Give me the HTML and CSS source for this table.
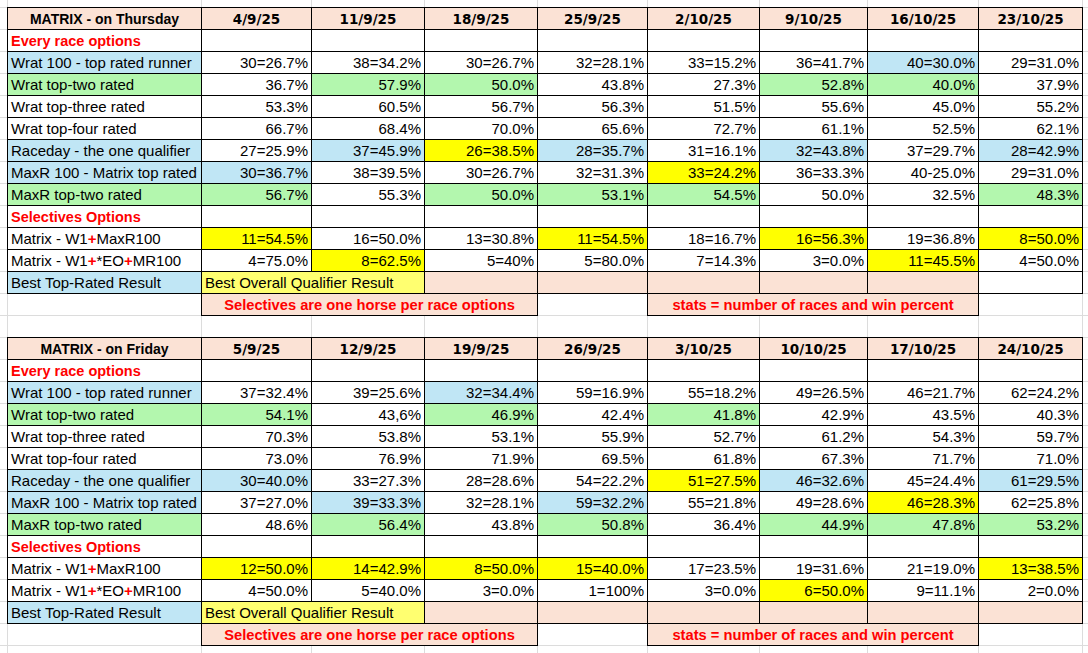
FILE: index.html
```html
<!DOCTYPE html>
<html>
<head>
<meta charset="utf-8">
<link rel="stylesheet" href="styles.css">
</head>
<body>
<div class="sheet">
  <div class="tbl">
    <div class="c hdr">MATRIX - on Thursday</div>
    <div class="c hdr date">4/9/25</div>
    <div class="c hdr date">11/9/25</div>
    <div class="c hdr date">18/9/25</div>
    <div class="c hdr date">25/9/25</div>
    <div class="c hdr date">2/10/25</div>
    <div class="c hdr date">9/10/25</div>
    <div class="c hdr date">16/10/25</div>
    <div class="c hdr date">23/10/25</div>

    <div class="c sec">Every race options</div>
    <div class="c"></div><div class="c"></div><div class="c"></div><div class="c"></div><div class="c"></div><div class="c"></div><div class="c"></div><div class="c"></div>

    <div class="c lbl blue">Wrat 100 - top rated runner</div>
    <div class="c num">30=26.7%</div>
    <div class="c num">38=34.2%</div>
    <div class="c num">30=26.7%</div>
    <div class="c num">32=28.1%</div>
    <div class="c num">33=15.2%</div>
    <div class="c num">36=41.7%</div>
    <div class="c num blue">40=30.0%</div>
    <div class="c num">29=31.0%</div>

    <div class="c lbl green">Wrat top-two rated</div>
    <div class="c num">36.7%</div>
    <div class="c num green">57.9%</div>
    <div class="c num green">50.0%</div>
    <div class="c num">43.8%</div>
    <div class="c num">27.3%</div>
    <div class="c num green">52.8%</div>
    <div class="c num green">40.0%</div>
    <div class="c num">37.9%</div>

    <div class="c lbl">Wrat top-three rated</div>
    <div class="c num">53.3%</div>
    <div class="c num">60.5%</div>
    <div class="c num">56.7%</div>
    <div class="c num">56.3%</div>
    <div class="c num">51.5%</div>
    <div class="c num">55.6%</div>
    <div class="c num">45.0%</div>
    <div class="c num">55.2%</div>

    <div class="c lbl">Wrat top-four rated</div>
    <div class="c num">66.7%</div>
    <div class="c num">68.4%</div>
    <div class="c num">70.0%</div>
    <div class="c num">65.6%</div>
    <div class="c num">72.7%</div>
    <div class="c num">61.1%</div>
    <div class="c num">52.5%</div>
    <div class="c num">62.1%</div>

    <div class="c lbl blue">Raceday - the one qualifier</div>
    <div class="c num">27=25.9%</div>
    <div class="c num blue">37=45.9%</div>
    <div class="c num yellow">26=38.5%</div>
    <div class="c num blue">28=35.7%</div>
    <div class="c num">31=16.1%</div>
    <div class="c num blue">32=43.8%</div>
    <div class="c num">37=29.7%</div>
    <div class="c num blue">28=42.9%</div>

    <div class="c lbl blue">MaxR 100 - Matrix top rated</div>
    <div class="c num blue">30=36.7%</div>
    <div class="c num">38=39.5%</div>
    <div class="c num">30=26.7%</div>
    <div class="c num">32=31.3%</div>
    <div class="c num yellow">33=24.2%</div>
    <div class="c num">36=33.3%</div>
    <div class="c num">40-25.0%</div>
    <div class="c num">29=31.0%</div>

    <div class="c lbl green">MaxR top-two rated</div>
    <div class="c num green">56.7%</div>
    <div class="c num">55.3%</div>
    <div class="c num green">50.0%</div>
    <div class="c num green">53.1%</div>
    <div class="c num green">54.5%</div>
    <div class="c num">50.0%</div>
    <div class="c num">32.5%</div>
    <div class="c num green">48.3%</div>

    <div class="c sec">Selectives Options</div>
    <div class="c"></div><div class="c"></div><div class="c"></div><div class="c"></div><div class="c"></div><div class="c"></div><div class="c"></div><div class="c"></div>

    <div class="c lbl">Matrix - W1<span class="plus">+</span>MaxR100</div>
    <div class="c num yellow">11=54.5%</div>
    <div class="c num">16=50.0%</div>
    <div class="c num">13=30.8%</div>
    <div class="c num yellow">11=54.5%</div>
    <div class="c num">18=16.7%</div>
    <div class="c num yellow">16=56.3%</div>
    <div class="c num">19=36.8%</div>
    <div class="c num yellow">8=50.0%</div>

    <div class="c lbl">Matrix - W1<span class="plus">+</span>*EO<span class="plus">+</span>MR100</div>
    <div class="c num">4=75.0%</div>
    <div class="c num yellow">8=62.5%</div>
    <div class="c num">5=40%</div>
    <div class="c num">5=80.0%</div>
    <div class="c num">7=14.3%</div>
    <div class="c num">3=0.0%</div>
    <div class="c num yellow">11=45.5%</div>
    <div class="c num">4=50.0%</div>

    <div class="c lbl blue">Best Top-Rated Result</div>
    <div class="c lbl best span2">Best Overall Qualifier Result</div>
    <div class="c salmon"></div>
    <div class="c salmon"></div>
    <div class="c salmon"></div>
    <div class="c salmon"></div>
    <div class="c salmon"></div>
    <div class="c"></div>
  </div>
  <div class="notes">
    <div class="blank"></div>
    <div class="note">Selectives are one horse per race options</div>
    <div class="blank"></div>
    <div class="note">stats = number of races and win percent</div>
    <div class="blank"></div>
  </div>

  <div class="tbl second">
    <div class="c hdr">MATRIX - on Friday</div>
    <div class="c hdr date">5/9/25</div>
    <div class="c hdr date">12/9/25</div>
    <div class="c hdr date">19/9/25</div>
    <div class="c hdr date">26/9/25</div>
    <div class="c hdr date">3/10/25</div>
    <div class="c hdr date">10/10/25</div>
    <div class="c hdr date">17/10/25</div>
    <div class="c hdr date">24/10/25</div>

    <div class="c sec">Every race options</div>
    <div class="c"></div><div class="c"></div><div class="c"></div><div class="c"></div><div class="c"></div><div class="c"></div><div class="c"></div><div class="c"></div>

    <div class="c lbl blue">Wrat 100 - top rated runner</div>
    <div class="c num">37=32.4%</div>
    <div class="c num">39=25.6%</div>
    <div class="c num blue">32=34.4%</div>
    <div class="c num">59=16.9%</div>
    <div class="c num">55=18.2%</div>
    <div class="c num">49=26.5%</div>
    <div class="c num">46=21.7%</div>
    <div class="c num">62=24.2%</div>

    <div class="c lbl green">Wrat top-two rated</div>
    <div class="c num green">54.1%</div>
    <div class="c num">43,6%</div>
    <div class="c num green">46.9%</div>
    <div class="c num">42.4%</div>
    <div class="c num green">41.8%</div>
    <div class="c num">42.9%</div>
    <div class="c num">43.5%</div>
    <div class="c num">40.3%</div>

    <div class="c lbl">Wrat top-three rated</div>
    <div class="c num">70.3%</div>
    <div class="c num">53.8%</div>
    <div class="c num">53.1%</div>
    <div class="c num">55.9%</div>
    <div class="c num">52.7%</div>
    <div class="c num">61.2%</div>
    <div class="c num">54.3%</div>
    <div class="c num">59.7%</div>

    <div class="c lbl">Wrat top-four rated</div>
    <div class="c num">73.0%</div>
    <div class="c num">76.9%</div>
    <div class="c num">71.9%</div>
    <div class="c num">69.5%</div>
    <div class="c num">61.8%</div>
    <div class="c num">67.3%</div>
    <div class="c num">71.7%</div>
    <div class="c num">71.0%</div>

    <div class="c lbl blue">Raceday - the one qualifier</div>
    <div class="c num blue">30=40.0%</div>
    <div class="c num">33=27.3%</div>
    <div class="c num">28=28.6%</div>
    <div class="c num">54=22.2%</div>
    <div class="c num yellow">51=27.5%</div>
    <div class="c num blue">46=32.6%</div>
    <div class="c num">45=24.4%</div>
    <div class="c num blue">61=29.5%</div>

    <div class="c lbl blue">MaxR 100 - Matrix top rated</div>
    <div class="c num">37=27.0%</div>
    <div class="c num blue">39=33.3%</div>
    <div class="c num">32=28.1%</div>
    <div class="c num blue">59=32.2%</div>
    <div class="c num">55=21.8%</div>
    <div class="c num">49=28.6%</div>
    <div class="c num yellow">46=28.3%</div>
    <div class="c num">62=25.8%</div>

    <div class="c lbl green">MaxR top-two rated</div>
    <div class="c num">48.6%</div>
    <div class="c num green">56.4%</div>
    <div class="c num">43.8%</div>
    <div class="c num green">50.8%</div>
    <div class="c num">36.4%</div>
    <div class="c num green">44.9%</div>
    <div class="c num green">47.8%</div>
    <div class="c num green">53.2%</div>

    <div class="c sec">Selectives Options</div>
    <div class="c"></div><div class="c"></div><div class="c"></div><div class="c"></div><div class="c"></div><div class="c"></div><div class="c"></div><div class="c"></div>

    <div class="c lbl">Matrix - W1<span class="plus">+</span>MaxR100</div>
    <div class="c num yellow">12=50.0%</div>
    <div class="c num yellow">14=42.9%</div>
    <div class="c num yellow">8=50.0%</div>
    <div class="c num yellow">15=40.0%</div>
    <div class="c num">17=23.5%</div>
    <div class="c num">19=31.6%</div>
    <div class="c num">21=19.0%</div>
    <div class="c num yellow">13=38.5%</div>

    <div class="c lbl">Matrix - W1<span class="plus">+</span>*EO<span class="plus">+</span>MR100</div>
    <div class="c num">4=50.0%</div>
    <div class="c num">5=40.0%</div>
    <div class="c num">3=0.0%</div>
    <div class="c num">1=100%</div>
    <div class="c num">3=0.0%</div>
    <div class="c num yellow">6=50.0%</div>
    <div class="c num">9=11.1%</div>
    <div class="c num">2=0.0%</div>

    <div class="c lbl blue">Best Top-Rated Result</div>
    <div class="c lbl best span2">Best Overall Qualifier Result</div>
    <div class="c salmon"></div>
    <div class="c salmon"></div>
    <div class="c salmon"></div>
    <div class="c salmon"></div>
    <div class="c salmon"></div>
    <div class="c salmon"></div>
  </div>
  <div class="notes">
    <div class="blank"></div>
    <div class="note">Selectives are one horse per race options</div>
    <div class="blank"></div>
    <div class="note">stats = number of races and win percent</div>
    <div class="blank"></div>
  </div>
</div>
</body>
</html>
```
FILE: styles.css
```css
html, body {
  margin: 0;
  padding: 0;
}

body {
  width: 1088px;
  height: 653px;
  overflow: hidden;
  font-family: "Liberation Sans", Arial, sans-serif;
  color: #000;
  background-color: #fff;
  background-image:
    linear-gradient(to right,
      transparent 7px, #dcdcdc 7px 8px,
      transparent 8px 201px, #dcdcdc 201px 202px,
      transparent 202px 311px, #dcdcdc 311px 312px,
      transparent 312px 424px, #dcdcdc 424px 425px,
      transparent 425px 537px, #dcdcdc 537px 538px,
      transparent 538px 647px, #dcdcdc 647px 648px,
      transparent 648px 759px, #dcdcdc 759px 760px,
      transparent 760px 867px, #dcdcdc 867px 868px,
      transparent 868px 978px, #dcdcdc 978px 979px,
      transparent 979px 1082px, #dcdcdc 1082px 1083px,
      transparent 1083px),
    linear-gradient(to bottom, #dcdcdc 0 1px, transparent 1px);
  background-size: 100% 100%, 100% 22px;
  background-position: 0 0, 0 7px;
  background-repeat: no-repeat, repeat;
}

.sheet {
  display: flex;
  flex-direction: column;
  align-items: flex-start;
  padding: 7px 0 0 7px;
}

.tbl {
  display: grid;
  grid-template-columns: 193px 109px 112px 112px 109px 111px 107px 110px 103px;
  grid-auto-rows: 21px;
  gap: 1px;
  padding: 1px;
  background: #000;
}

.tbl.second {
  margin-top: 21px;
}

.c {
  background: #fff;
  font-size: 15px;
  line-height: 20px;
  padding: 1px 3px 0 3px;
  white-space: nowrap;
  overflow: visible;
  min-width: 0;
}

.hdr {
  background: #fbe2d5;
  font-weight: bold;
  font-size: 14px;
  text-align: center;
  padding-top: 2px;
  line-height: 19px;
}

.date {
  font-family: "DejaVu Sans", "Liberation Sans", sans-serif;
  font-size: 13.5px;
}

.sec {
  color: #f00;
  font-weight: bold;
  font-size: 14.5px;
}

.lbl {
  text-align: left;
}

.num {
  text-align: right;
  padding-right: 3px;
}

.blue {
  background: #c0e6f5;
}

.green {
  background: #b3f7ae;
}

.yellow {
  background: #ffff00;
}

.best {
  background: #ffff70;
}

.salmon {
  background: #fbe2d5;
}

.span2 {
  grid-column: span 2;
}

.plus {
  color: #f00;
  font-weight: bold;
}

.notes {
  display: grid;
  grid-template-columns: 193px 109px 112px 112px 109px 111px 107px 110px 103px;
  grid-auto-rows: 22px;
  column-gap: 1px;
  padding: 0 1px;
}

.note {
  grid-column: span 3;
  margin: 0 -1px;
  border: 1px solid #000;
  border-top: none;
  background: #fbe2d5;
  color: #f00;
  font-weight: bold;
  font-size: 14.7px;
  line-height: 20px;
  padding-top: 1px;
  text-align: center;
  white-space: nowrap;
}
```
